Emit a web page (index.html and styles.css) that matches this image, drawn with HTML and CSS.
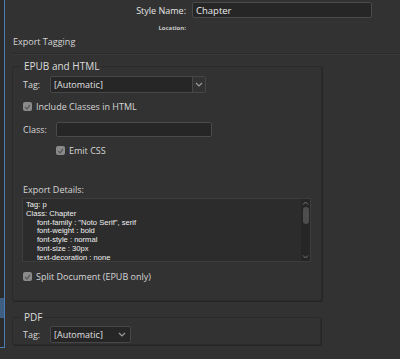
FILE: index.html
```html
<html>
  <head>
    <title>Paragraph Style Options</title>
    <link rel="stylesheet" href="styles.css">
  </head>
  <body>
    <div class="sidebar">
      <div class="sidebar-item selected"></div>
    </div>
    <div class="main">
      <div class="header">
        <label class="head-label">Style Name:</label>
        <input class="text-input name-input" type="text" value="Chapter">
        <span class="location">Location:</span>
      </div>

      <div class="section-title">Export Tagging</div>

      <fieldset class="group epub">
        <legend>EPUB and HTML</legend>
        <div class="row">
          <span class="lbl">Tag:</span>
          <div class="select wide">
            <span class="select-value">[Automatic]</span>
            <span class="select-arrow">
              <svg width="8" height="5" viewBox="0 0 8 5"><path d="M1 1 L4 4 L7 1" fill="none" stroke="#9a9a9a" stroke-width="1.2"/></svg>
            </span>
          </div>
        </div>
        <div class="check-row">
          <span class="check">
            <svg width="7" height="6" viewBox="0 0 7 6"><path d="M1 3 L3 5 L6 1" fill="none" stroke="#5a5a5a" stroke-width="1.3"/></svg>
          </span>
          <span>Include Classes in HTML</span>
        </div>
        <div class="row class-row">
          <span class="lbl">Class:</span>
          <input class="text-input class-input" type="text" value="">
        </div>
        <div class="check-row indent">
          <span class="check">
            <svg width="7" height="6" viewBox="0 0 7 6"><path d="M1 3 L3 5 L6 1" fill="none" stroke="#5a5a5a" stroke-width="1.3"/></svg>
          </span>
          <span>Emit CSS</span>
        </div>

        <div class="details-label">Export Details:</div>
        <div class="details">
          <div class="details-text">
            <div>Tag: p</div>
            <div>Class: Chapter</div>
            <div class="prop">font-family : "Noto Serif", serif</div>
            <div class="prop">font-weight : bold</div>
            <div class="prop">font-style : normal</div>
            <div class="prop">font-size : 30px</div>
            <div class="prop">text-decoration : none</div>
          </div>
          <div class="scrollbar">
            <svg width="7" height="4" viewBox="0 0 7 4"><path d="M1 3.5 L3.5 1 L6 3.5" fill="none" stroke="#777" stroke-width="1"/></svg>
            <div class="thumb"></div>
            <div class="track"></div>
            <svg width="7" height="4" viewBox="0 0 7 4"><path d="M1 0.5 L3.5 3 L6 0.5" fill="none" stroke="#777" stroke-width="1"/></svg>
          </div>
        </div>
        <div class="check-row split">
          <span class="check">
            <svg width="7" height="6" viewBox="0 0 7 6"><path d="M1 3 L3 5 L6 1" fill="none" stroke="#5a5a5a" stroke-width="1.3"/></svg>
          </span>
          <span>Split Document (EPUB only)</span>
        </div>
      </fieldset>

      <fieldset class="group pdf">
        <legend>PDF</legend>
        <div class="row">
          <span class="lbl">Tag:</span>
          <div class="select narrow">
            <span class="select-value">[Automatic]</span>
            <span class="select-arrow plain">
              <svg width="8" height="5" viewBox="0 0 8 5"><path d="M1 1 L4 4 L7 1" fill="none" stroke="#9a9a9a" stroke-width="1.2"/></svg>
            </span>
          </div>
        </div>
      </fieldset>
    </div>
  </body>
</html>
```

FILE: styles.css
```css
body {
  margin: 0;
  background: #323232;
  color: #d6d6d6;
  font-family: "Open Sans", "Noto Sans", sans-serif;
  font-size: 9px;
  display: flex;
  height: 359px;
  overflow: hidden;
}

/* left list panel */
.sidebar {
  width: 5px;
  height: 348px;
  background: #2a2a2a;
  border-right: 1px solid #4b7bb1;
  border-bottom: 1px solid #4b7bb1;
  display: flex;
  flex-direction: column;
  justify-content: flex-end;
  padding-bottom: 29px;
  box-sizing: border-box;
}
.sidebar-item.selected {
  height: 20px;
  background: #3e5f82;
}

.main {
  flex: 1;
  padding-left: 8px;
}

/* header */
.header {
  display: grid;
  grid-template-columns: 173px 180px;
  column-gap: 6px;
  align-items: center;
  padding-top: 2px;
}
.head-label {
  text-align: right;
  font-size: 9px;
  color: #e4e4e4;
}
.location {
  grid-column: 1;
  text-align: right;
  font-size: 6px;
  font-weight: bold;
  color: #c8c8c8;
  margin-top: 6px;
}
.text-input {
  background: #262626;
  border: 1px solid #4a4a4a;
  border-radius: 2px;
  color: #ececec;
  font-family: "Open Sans", "Noto Sans", sans-serif;
  font-size: 9px;
  padding: 0 3px;
  box-sizing: border-box;
  outline: none;
}
.name-input {
  height: 16px;
  font-size: 9.5px;
}

.section-title {
  font-size: 9px;
  margin-top: 3px;
  padding-bottom: 5px;
  border-bottom: 1px solid #2a2a2a;
  box-shadow: 0 1px 0 #3a3a3a;
}

/* fieldset groups */
.group {
  margin: 5px 0 0 -1px;
  width: 309px;
  box-sizing: border-box;
  border: 1px solid #2a2a2a;
  box-shadow: 1px 1px 0 #262626;
  border-radius: 2px;
  padding: 0 10px 0 10px;
}
.group legend {
  font-size: 10px;
  padding: 0 2px;
  margin-left: -1px;
  color: #dcdcdc;
}
.epub {
  height: 242px;
}
.pdf {
  margin-top: 9px;
  height: 35px;
}

.row {
  display: flex;
  align-items: center;
  height: 17px;
  margin-top: 3px;
}
.lbl {
  width: 27px;
}
.select {
  display: flex;
  height: 17px;
  background: #262626;
  border: 1px solid #474747;
  border-radius: 2px;
  box-sizing: border-box;
}
.select.wide {
  width: 156px;
}
.select.narrow {
  width: 81px;
}
.pdf .row {
  margin-top: 2px;
}
.select-value {
  flex: 1;
  padding-left: 3px;
  line-height: 15px;
  color: #e0e0e0;
}
.select-arrow {
  width: 12px;
  border-left: 1px solid #474747;
  background: #323232;
  display: flex;
  align-items: center;
  justify-content: center;
}
.select-arrow.plain {
  border-left: none;
  background: transparent;
  width: 16px;
}

.check-row {
  display: flex;
  align-items: center;
  gap: 4px;
  margin-top: 7px;
}
.check-row.indent {
  padding-left: 33px;
  margin-top: 6px;
}
.check {
  width: 9px;
  height: 9px;
  background: #8a8a8a;
  border-radius: 2px;
  display: flex;
  align-items: center;
  justify-content: center;
}
.class-row {
  margin-top: 8px;
}
.class-row .lbl {
  width: 33px;
}
.class-input {
  width: 156px;
  height: 15px;
}

.details-label {
  margin-top: 26px;
}
.details {
  display: flex;
  margin-top: 2px;
  margin-left: -1px;
  width: 289px;
  height: 64px;
  border: 1px solid #3d3d3d;
  background: #2c2c2c;
  box-sizing: border-box;
}
.details-text {
  flex: 1;
  padding: 2px 3px;
  font-family: "Liberation Sans", sans-serif;
  font-size: 7.6px;
  line-height: 8.8px;
  color: #f0f0f0;
}
.details-text .prop {
  padding-left: 11px;
}
.scrollbar {
  width: 9px;
  background: #262626;
  display: flex;
  flex-direction: column;
  align-items: center;
  padding: 2px 0;
  box-sizing: border-box;
}
.thumb {
  width: 6px;
  height: 17px;
  background: #4d4d4d;
  border-radius: 3px;
  margin-top: 2px;
}
.track {
  flex: 1;
}
.split {
  margin-top: 8px;
}
```
